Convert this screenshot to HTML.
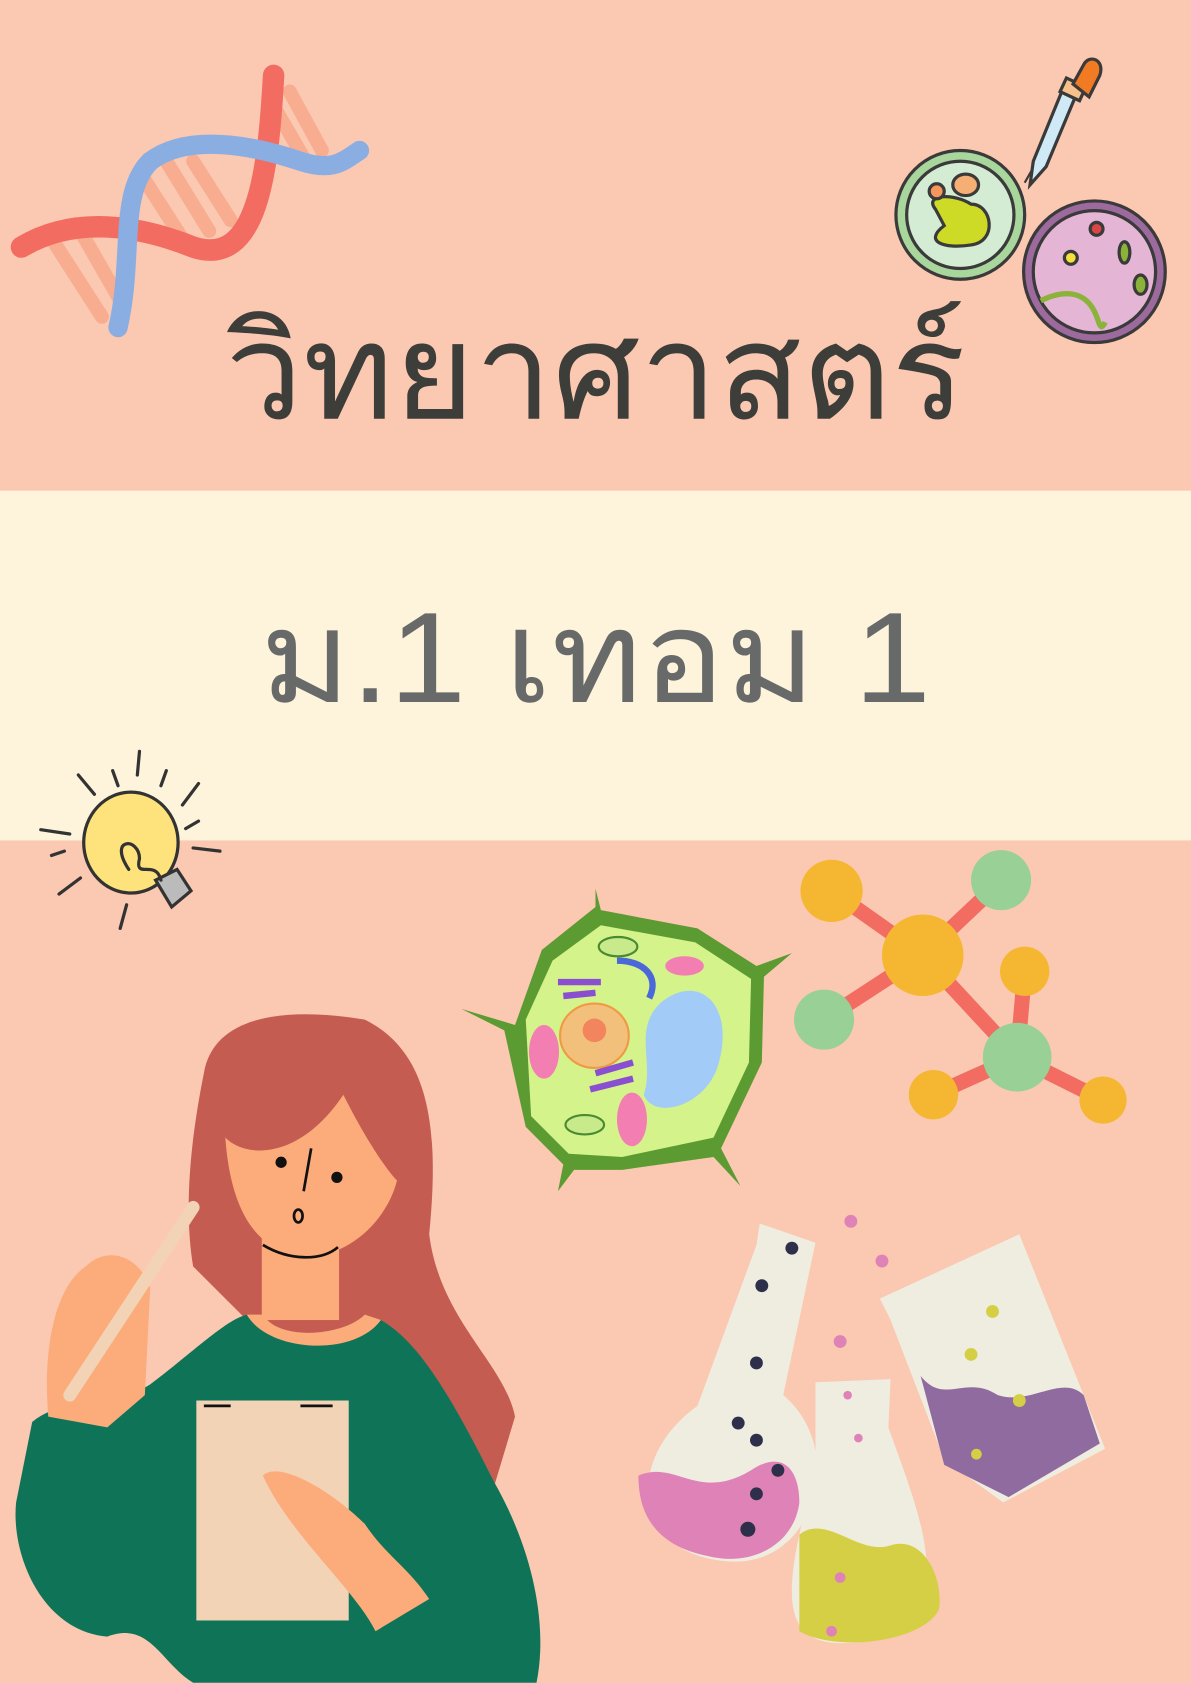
<!DOCTYPE html>
<html><head><meta charset="utf-8"><style>
html,body{margin:0;padding:0;background:#fbc8b1;}
svg{display:block}
</style></head><body>
<svg width="1191" height="1683" viewBox="0 0 1110 1568" xmlns="http://www.w3.org/2000/svg">
<rect width="1110" height="1568" fill="#fbc8b1"/>
<rect y="457" width="1110" height="326" fill="#fef4dc"/>

<!-- DNA -->
<g stroke-linecap="round" fill="none">
<g stroke="#f8ad90" stroke-width="13">
<line x1="50" y1="225" x2="95" y2="295"/><line x1="75" y1="215" x2="115" y2="285"/>
<line x1="130" y1="160" x2="175" y2="230"/><line x1="155" y1="150" x2="195" y2="215"/>
<line x1="180" y1="150" x2="215" y2="205"/><line x1="250" y1="90" x2="285" y2="150"/><line x1="270" y1="85" x2="300" y2="140"/>
</g>
<path d="M20 230 C70 200 130 210 180 230 C240 250 250 160 255 70" stroke="#f26c62" stroke-width="20"/>
<path d="M110 305 C125 240 110 180 140 150 C180 120 250 140 280 150 C310 160 320 150 335 140" stroke="#8aaee2" stroke-width="18"/>
</g>

<!-- petri dishes -->
<g stroke="#3a3a3a" stroke-width="3">
<circle cx="895" cy="200" r="60" fill="#a9d69d"/><circle cx="895" cy="200" r="50" fill="#d4ecd3"/>
<path d="M872 195 C860 180 890 180 905 190 C925 190 930 225 905 228 C880 232 860 225 880 210Z" fill="#cddb27"/>
<ellipse cx="900" cy="172" rx="12" ry="10" fill="#f5ae73"/><circle cx="873" cy="178" r="7" fill="#f5965d"/>
<circle cx="1020" cy="253" r="66" fill="#9d6a9d"/><circle cx="1020" cy="253" r="57" fill="#e5b5d6"/>
<path d="M970 280 C990 270 1010 270 1020 290 C1025 300 1025 310 1030 300" fill="none" stroke="#8bb33a" stroke-width="5"/>
<circle cx="998" cy="240" r="6" fill="#f5e03c"/><ellipse cx="1048" cy="235" rx="5" ry="10" fill="#8bb33a"/><ellipse cx="1063" cy="265" rx="6" ry="9" fill="#8bb33a"/><circle cx="1022" cy="213" r="6" fill="#d94745"/>
<path d="M955 170 L995 100" stroke-width="2"/>
<path d="M1003 88 L975 155 L960 172 L963 150 L990 84Z" fill="#cfeaf6"/>
<rect x="990" y="76" width="20" height="14" fill="#f8c08a" transform="rotate(25 1000 83)"/>
<path d="M1000 78 L1010 60 C1015 50 1030 55 1025 70 L1015 90Z" fill="#f07b23"/>
</g>

<text x="555" y="390" text-anchor="middle" font-family="'Liberation Sans','DejaVu Sans',sans-serif" font-size="125" fill="#3d3d3a" textLength="690" lengthAdjust="spacingAndGlyphs">วิทยาศาสตร์</text>
<text x="555" y="654" text-anchor="middle" font-family="'Liberation Sans','DejaVu Sans',sans-serif" font-size="120" fill="#686a6a" textLength="625" lengthAdjust="spacingAndGlyphs">ม.1 เทอม 1</text>

<!-- bulb -->
<g stroke="#333" stroke-width="3" stroke-linecap="round">
<line x1="130" y1="700" x2="128" y2="722"/><line x1="105" y1="718" x2="110" y2="732"/><line x1="73" y1="722" x2="88" y2="740"/><line x1="155" y1="718" x2="150" y2="732"/><line x1="185" y1="730" x2="170" y2="750"/><line x1="185" y1="765" x2="173" y2="772"/><line x1="38" y1="773" x2="65" y2="777"/><line x1="60" y1="793" x2="48" y2="797"/><line x1="180" y1="790" x2="205" y2="793"/><line x1="55" y1="833" x2="75" y2="818"/><line x1="118" y1="843" x2="112" y2="865"/>
<ellipse cx="122" cy="785" rx="44" ry="47" fill="#fee27c"/>
<path d="M145 820 L160 845 L178 830 L165 810Z" fill="#bbb"/>
<path d="M120 810 C100 780 130 780 130 800 C125 820 145 800 150 820" fill="none"/>
</g>

<!-- cell -->
<g>
<path d="M430 940 L480 955 L505 885 L555 845 L555 828 L560 848 L650 865 L705 900 L738 888 L712 910 L710 990 L672 1070 L690 1105 L665 1078 L580 1090 L535 1090 L520 1110 L525 1085 L490 1050 L470 960Z" fill="#5c9a32"/>
<path d="M490 950 L515 895 L560 862 L648 878 L700 912 L698 990 L665 1060 L580 1078 L530 1075 L495 1040Z" fill="#d4f38a"/>
<path d="M615 935 C650 905 685 935 670 990 C660 1030 610 1045 600 1020 C610 990 590 960 615 935Z" fill="#a2cbf8"/>
<ellipse cx="554" cy="965" rx="32" ry="30" fill="#f3c07c" stroke="#f09a46" stroke-width="2"/>
<circle cx="554" cy="960" r="11" fill="#f2845e"/>
<ellipse cx="507" cy="980" rx="14" ry="25" fill="#f37fb2"/>
<ellipse cx="589" cy="1043" rx="14" ry="25" fill="#f37fb2"/>
<path d="M575 895 C600 895 615 910 605 930" stroke="#4b68d8" stroke-width="6" fill="none"/>
<path d="M520 915 L560 915 M525 928 L555 925 M555 1000 L590 990 M550 1015 L590 1005" stroke="#8a4fd0" stroke-width="6"/>
<ellipse cx="576" cy="882" rx="18" ry="9" fill="#c9ea8a" stroke="#4a8a30" stroke-width="2"/>
<ellipse cx="545" cy="1048" rx="18" ry="9" fill="#c9ea8a" stroke="#4a8a30" stroke-width="2"/>
<ellipse cx="638" cy="900" rx="18" ry="9" fill="#f37fb2"/>
</g>

<!-- molecule -->
<g stroke="#f26c62" stroke-width="14">
<line x1="775" y1="830" x2="860" y2="890"/><line x1="860" y1="890" x2="932" y2="822"/><line x1="860" y1="890" x2="768" y2="950"/>
<line x1="860" y1="890" x2="948" y2="985"/><line x1="948" y1="985" x2="955" y2="905"/><line x1="948" y1="985" x2="870" y2="1020"/><line x1="948" y1="985" x2="1028" y2="1025"/>
</g>
<circle cx="775" cy="830" r="29" fill="#f5b731"/><circle cx="933" cy="820" r="28" fill="#98d096"/>
<circle cx="860" cy="890" r="38" fill="#f5b731"/><circle cx="768" cy="950" r="28" fill="#98d096"/>
<circle cx="955" cy="905" r="23" fill="#f5b731"/><circle cx="948" cy="985" r="32" fill="#98d096"/>
<circle cx="870" cy="1020" r="23" fill="#f5b731"/><circle cx="1028" cy="1025" r="22" fill="#f5b731"/>

<!-- flasks -->
<path d="M708 1140 L760 1158 L730 1300 C790 1350 760 1460 680 1455 C590 1450 580 1360 650 1310 L705 1160Z" fill="#efece0"/>
<path d="M595 1375 C630 1360 650 1400 700 1370 C730 1350 745 1370 745 1400 C740 1440 700 1460 660 1450 C610 1440 595 1410 595 1375Z" fill="#df82b7"/>
<path d="M760 1288 L830 1285 L828 1330 C860 1420 900 1510 800 1530 C720 1540 730 1480 760 1370Z" fill="#efece0"/>
<path d="M745 1430 C770 1410 800 1450 830 1440 C860 1430 880 1470 875 1500 C860 1530 780 1540 745 1520Z" fill="#d5cf45"/>
<path d="M820 1210 L950 1150 L1030 1350 L935 1400 L880 1360 L830 1230Z" fill="#efece0"/>
<path d="M858 1282 C880 1310 900 1280 930 1300 C960 1310 990 1280 1010 1300 L1025 1345 L940 1395 L880 1365Z" fill="#8f6ba0"/>
<g fill="#2e2f4a"><circle cx="738" cy="1163" r="6"/><circle cx="710" cy="1198" r="6"/><circle cx="705" cy="1270" r="6"/><circle cx="688" cy="1326" r="6"/><circle cx="705" cy="1342" r="6"/><circle cx="725" cy="1370" r="6"/><circle cx="705" cy="1392" r="6"/><circle cx="697" cy="1425" r="7"/></g>
<g fill="#df82b7"><circle cx="793" cy="1138" r="6"/><circle cx="822" cy="1175" r="6"/><circle cx="783" cy="1250" r="6"/><circle cx="790" cy="1300" r="4"/><circle cx="800" cy="1340" r="4"/><circle cx="783" cy="1470" r="5"/><circle cx="775" cy="1520" r="5"/></g>
<g fill="#d5cf45"><circle cx="925" cy="1222" r="6"/><circle cx="905" cy="1262" r="6"/><circle cx="950" cy="1305" r="6"/><circle cx="910" cy="1355" r="5"/></g>

<!-- girl -->
<path d="M190 1000 C200 940 280 940 340 950 C400 980 410 1050 400 1150 C410 1230 470 1270 480 1320 L450 1420 L360 1400 L300 1250 L230 1230 L180 1180 C170 1120 180 1050 190 1000Z" fill="#c45c52"/>
<path d="M210 1060 C230 1080 280 1080 320 1020 C340 1060 360 1090 370 1100 C360 1140 320 1175 280 1170 C240 1165 215 1130 210 1060Z" fill="#fcab7b"/>
<rect x="244" y="1150" width="72" height="80" fill="#fcab7b"/>
<path d="M30 1325 C60 1300 110 1310 140 1290 C180 1260 210 1230 230 1225 C250 1250 330 1260 355 1230 C390 1250 420 1300 460 1380 C500 1450 510 1520 500 1568 L180 1568 C150 1550 140 1510 100 1525 C40 1520 10 1450 15 1400Z" fill="#0f7457"/>
<path d="M230 1225 C250 1260 330 1265 355 1230 L340 1225 C320 1245 260 1250 245 1225Z" fill="#fcab7b"/>
<rect x="183" y="1305" width="142" height="205" fill="#f3d3b6"/>
<path d="M245 1375 C260 1360 310 1390 340 1420 C360 1450 380 1460 400 1490 L350 1520 C330 1480 270 1430 245 1375Z" fill="#fcab7b"/>
<path d="M45 1320 C40 1260 50 1200 80 1180 C100 1160 130 1170 140 1200 L135 1300 L100 1330Z" fill="#fcab7b"/>
<line x1="65" y1="1300" x2="180" y2="1125" stroke="#f3d3b6" stroke-width="12" stroke-linecap="round"/>
<g stroke="#111" stroke-width="2.5" fill="none"><circle cx="262" cy="1083" r="4" fill="#111"/><circle cx="314" cy="1097" r="4" fill="#111"/><ellipse cx="278" cy="1133" rx="4" ry="6"/><path d="M245 1160 C270 1175 300 1175 315 1162"/><path d="M290 1070 L283 1110"/><path d="M190 1310 h25 M280 1310 h30"/></g>
</svg>
</body></html>
